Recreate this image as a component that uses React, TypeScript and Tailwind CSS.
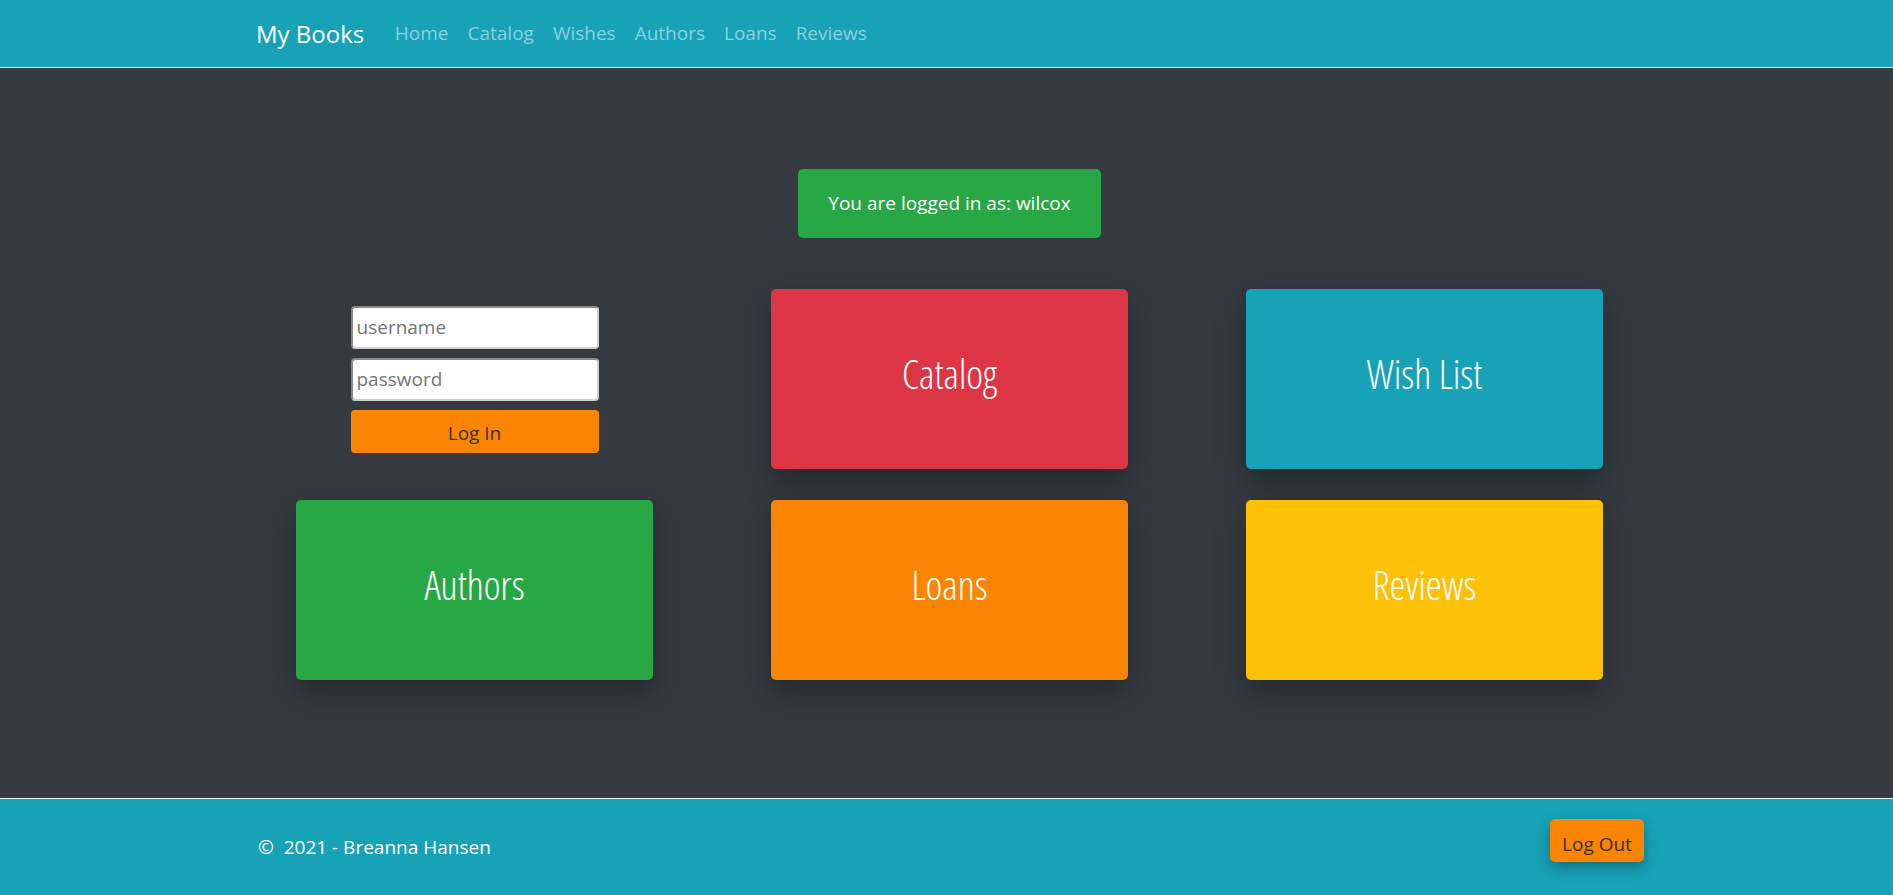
const navLinks = ['Home', 'Catalog', 'Wishes', 'Authors', 'Loans', 'Reviews'];

interface TileProps {
    label: string;
    color: string;
}

const Tile = ({ label, color }: TileProps) => (
    <a
        href="#"
        className={`flex h-[180px] w-[357px] items-center justify-center rounded-[5px] pb-[10px] ${color} shadow-[0_12px_32px_rgba(0,0,0,0.32)]`}
    >
        <span className="font-['Open_Sans'] text-[40px] font-light text-white [font-stretch:75%]">{label}</span>
    </a>
);

const LoginForm = () => (
    <div className="flex items-center justify-center">
        <form className="flex w-[248px] flex-col gap-[9px]">
            <input
                placeholder="username"
                className="h-[43px] w-full rounded-[4px] border-2 border-t-[#8a8a8a] border-l-[#8a8a8a] border-b-[#d0d0d0] border-r-[#d0d0d0] bg-white px-[4px] text-[19px] text-gray-800 placeholder:text-[#757575]"
            />
            <input
                placeholder="password"
                type="text"
                className="h-[43px] w-full rounded-[4px] border-2 border-t-[#8a8a8a] border-l-[#8a8a8a] border-b-[#d0d0d0] border-r-[#d0d0d0] bg-white px-[4px] text-[19px] text-gray-800 placeholder:text-[#757575]"
            />
            <button
                type="button"
                className="h-[43px] w-full rounded-[4px] bg-[#fb8500] pt-[4px] text-[19px] text-[#333]"
            >
                Log In
            </button>
        </form>
    </div>
);

export default function App() {
    return (
        <div className="flex min-h-screen flex-col bg-[#343a40] font-['Open_Sans',sans-serif]">
            {/* Navbar */}
            <nav className="h-[68px] border-b border-[#e8eef0] bg-[#17a2b8]">
                <div className="mx-auto flex h-full w-[1425px] items-center px-[22px]">
                    <a href="#" className="mr-[21px] text-[24px] text-white">My Books</a>
                    <div className="flex items-center">
                        {navLinks.map((l) => (
                            <a key={l} href="#" className="px-[9.5px] text-[19px] text-[#8bd0dc]">{l}</a>
                        ))}
                    </div>
                </div>
            </nav>

            {/* Main */}
            <main className="flex-1 pl-[6px] pt-[101px]">
                <div className="mx-auto flex h-[69px] w-[303px] items-center justify-center rounded-[5px] bg-[#28a745] text-[19px] text-white">
                    You are logged in as: wilcox
                </div>

                <div className="mt-[51px] flex justify-center">
                    <div className="grid grid-cols-[357px_357px_357px] gap-x-[118px] gap-y-[31px]">
                        <LoginForm />
                        <Tile label="Catalog" color="bg-[#dc3545]" />
                        <Tile label="Wish List" color="bg-[#17a2b8]" />
                        <Tile label="Authors" color="bg-[#28a745]" />
                        <Tile label="Loans" color="bg-[#fb8500]" />
                        <Tile label="Reviews" color="bg-[#ffc107]" />
                    </div>
                </div>
            </main>

            {/* Footer */}
            <footer className="h-[97px] border-t border-[#e8eef0] bg-[#17a2b8]">
                <div className="mx-auto flex h-full w-[1425px] items-center justify-between pl-[24px] pr-[15px]">
                    <p className="text-[19px] text-white">©&nbsp; 2021 - Breanna Hansen</p>
                    <button
                        type="button"
                        className="mb-[13px] h-[43px] w-[94px] rounded-[5px] bg-[#fb8500] pt-[8px] text-[19px] text-[#333] shadow-[0_6px_14px_rgba(0,0,0,0.3)]"
                    >
                        Log Out
                    </button>
                </div>
            </footer>
        </div>
    );
}
